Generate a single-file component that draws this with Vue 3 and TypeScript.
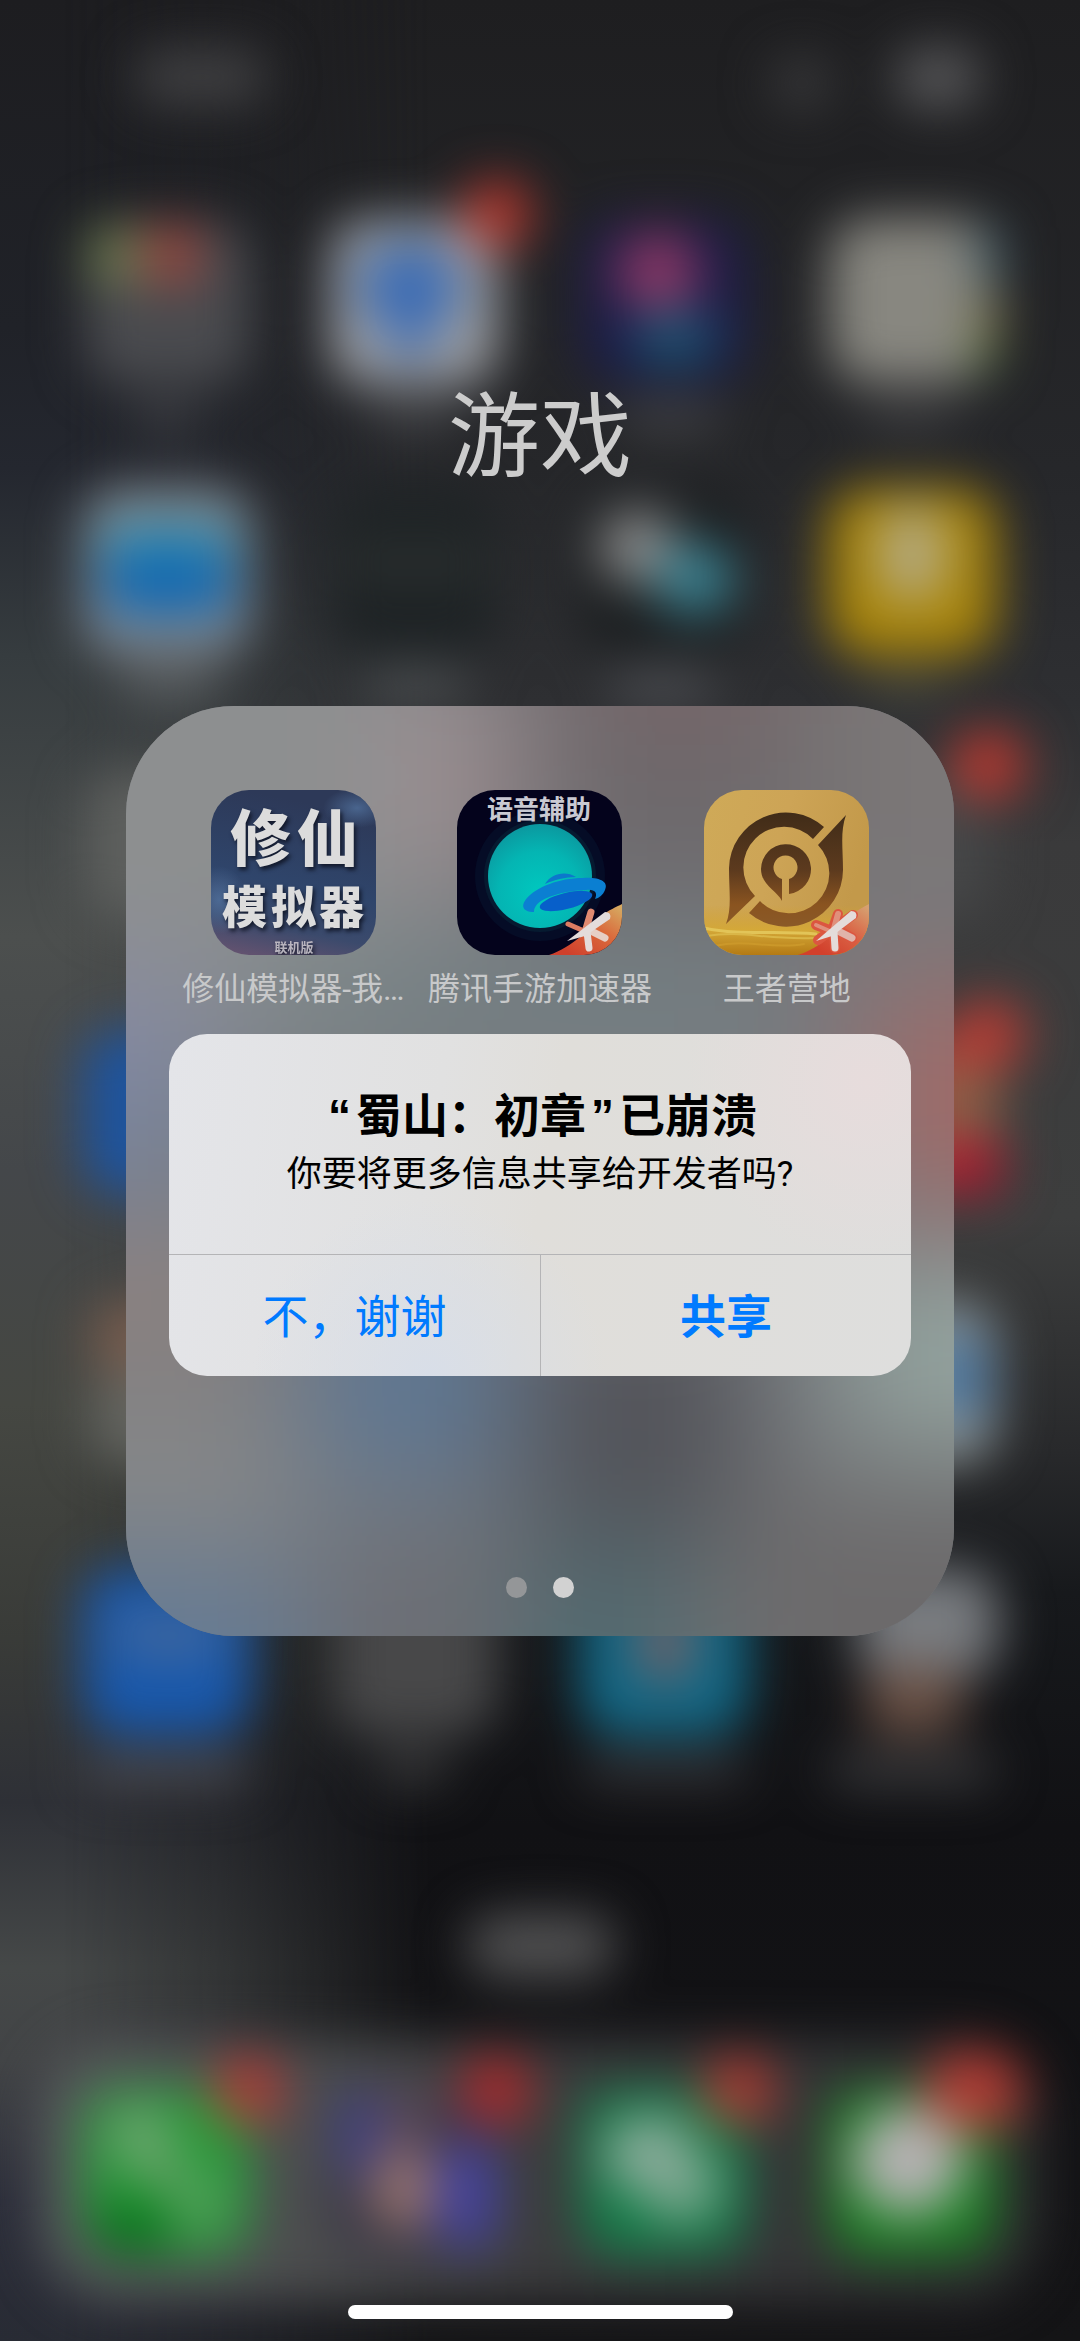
<script setup lang="ts">
interface Blob {
  x: number
  y: number
  w: number
  h: number
  r: number
  fill: string
}

// Home-screen icons, badges and captions behind the open folder.
const wallpaperBlobs: Blob[] = [
  { x: 136, y: 50, w: 130, h: 54, r: 20, fill: '#414143' },
  { x: 772, y: 58, w: 60, h: 50, r: 20, fill: '#39393b' },
  { x: 896, y: 48, w: 84, h: 60, r: 24, fill: '#565658' },
  { x: 85, y: 220, w: 165, h: 165, r: 38, fill: '#4a4b4f' },
  { x: 88, y: 226, w: 52, h: 58, r: 10, fill: '#6c7a50' },
  { x: 144, y: 226, w: 56, h: 58, r: 10, fill: '#98463e' },
  { x: 330, y: 218, w: 168, h: 168, r: 38, fill: '#9c9ea2' },
  { x: 360, y: 246, w: 100, h: 80, r: 40, fill: '#386ab4' },
  { x: 380, y: 290, w: 60, h: 66, r: 30, fill: '#4470b4' },
  { x: 462, y: 180, w: 70, h: 68, r: 34, fill: '#b6382e' },
  { x: 582, y: 218, w: 165, h: 165, r: 38, fill: '#1c1c48' },
  { x: 616, y: 234, w: 84, h: 76, r: 38, fill: '#8a3866' },
  { x: 632, y: 312, w: 84, h: 50, r: 25, fill: '#1d5674' },
  { x: 830, y: 218, w: 165, h: 165, r: 38, fill: '#888780' },
  { x: 975, y: 226, w: 26, h: 62, r: 8, fill: '#47626c' },
  { x: 975, y: 296, w: 26, h: 38, r: 8, fill: '#877a48' },
  { x: 970, y: 336, w: 26, h: 34, r: 8, fill: '#5c7a40' },
  { x: 135, y: 404, w: 64, h: 26, r: 12, fill: '#44454a' },
  { x: 370, y: 404, w: 90, h: 26, r: 12, fill: '#48494d' },
  { x: 620, y: 404, w: 100, h: 26, r: 12, fill: '#48494d' },
  { x: 865, y: 404, w: 90, h: 26, r: 12, fill: '#404042' },
  { x: 83, y: 488, w: 168, h: 168, r: 38, fill: '#848c94' },
  { x: 104, y: 526, w: 128, h: 50, r: 14, fill: '#2a8eb0' },
  { x: 104, y: 552, w: 128, h: 64, r: 18, fill: '#1468b0' },
  { x: 332, y: 490, w: 165, h: 165, r: 38, fill: '#1e2325' },
  { x: 340, y: 550, w: 150, h: 24, r: 12, fill: '#303433' },
  { x: 580, y: 490, w: 165, h: 165, r: 38, fill: '#1c1f21' },
  { x: 598, y: 510, w: 80, h: 74, r: 37, fill: '#8a8a8a' },
  { x: 656, y: 544, w: 78, h: 70, r: 35, fill: '#3b8494' },
  { x: 828, y: 488, w: 168, h: 168, r: 38, fill: '#aa860a' },
  { x: 878, y: 506, w: 68, h: 96, r: 34, fill: '#b4aa80' },
  { x: 120, y: 672, w: 100, h: 28, r: 14, fill: '#626668' },
  { x: 365, y: 672, w: 104, h: 28, r: 14, fill: '#55595b' },
  { x: 610, y: 672, w: 104, h: 28, r: 14, fill: '#55575c' },
  { x: 865, y: 672, w: 84, h: 24, r: 12, fill: '#4e4e40' },
  { x: 85, y: 770, w: 110, h: 150, r: 38, fill: '#5e605e' },
  { x: 900, y: 770, w: 90, h: 150, r: 38, fill: '#464748' },
  { x: 950, y: 730, w: 76, h: 70, r: 35, fill: '#b63830' },
  { x: 83, y: 1030, w: 168, h: 165, r: 38, fill: '#1e549e' },
  { x: 900, y: 1030, w: 98, h: 165, r: 38, fill: '#a04840' },
  { x: 930, y: 1072, w: 68, h: 64, r: 12, fill: '#8a6248' },
  { x: 930, y: 1140, w: 72, h: 54, r: 12, fill: '#a81c30' },
  { x: 950, y: 1000, w: 76, h: 70, r: 35, fill: '#b83c34' },
  { x: 90, y: 1300, w: 140, h: 78, r: 30, fill: '#765c4e' },
  { x: 90, y: 1372, w: 140, h: 90, r: 30, fill: '#646560' },
  { x: 890, y: 1300, w: 106, h: 164, r: 38, fill: '#8b9394' },
  { x: 926, y: 1334, w: 60, h: 84, r: 20, fill: '#4a76a0' },
  { x: 83, y: 1568, w: 168, h: 168, r: 38, fill: '#1858ac' },
  { x: 110, y: 1610, w: 116, h: 50, r: 25, fill: '#3e669e' },
  { x: 332, y: 1570, w: 165, h: 165, r: 38, fill: '#484849' },
  { x: 580, y: 1568, w: 168, h: 168, r: 38, fill: '#126886' },
  { x: 636, y: 1600, w: 58, h: 84, r: 29, fill: '#6c6268' },
  { x: 856, y: 1568, w: 142, h: 110, r: 38, fill: '#797c80' },
  { x: 866, y: 1668, w: 96, h: 66, r: 20, fill: '#6a5044' },
  { x: 84, y: 1756, w: 164, h: 30, r: 14, fill: '#4c4d55' },
  { x: 378, y: 1750, w: 70, h: 34, r: 14, fill: '#3c3c3d' },
  { x: 582, y: 1754, w: 164, h: 28, r: 14, fill: '#3a3a3e' },
  { x: 830, y: 1754, w: 164, h: 32, r: 14, fill: '#3d3d3f' },
  { x: 466, y: 1914, w: 150, h: 64, r: 32, fill: '#525253' },
]

const dockBlobs: Blob[] = [
  { x: 83, y: 2088, w: 168, h: 168, r: 38, fill: '#2a9a3c' },
  { x: 92, y: 2200, w: 80, h: 56, r: 28, fill: '#08781c' },
  { x: 112, y: 2106, w: 54, h: 56, r: 27, fill: '#78a87a' },
  { x: 134, y: 2140, w: 50, h: 50, r: 25, fill: '#68a068' },
  { x: 172, y: 2180, w: 50, h: 46, r: 22, fill: '#60a064' },
  { x: 332, y: 2090, w: 165, h: 165, r: 38, fill: '#3b3848' },
  { x: 336, y: 2090, w: 48, h: 90, r: 24, fill: '#40407e' },
  { x: 384, y: 2090, w: 44, h: 70, r: 20, fill: '#604c58' },
  { x: 372, y: 2150, w: 62, h: 80, r: 30, fill: '#98746c' },
  { x: 436, y: 2140, w: 62, h: 110, r: 30, fill: '#44429c' },
  { x: 580, y: 2088, w: 168, h: 168, r: 38, fill: '#147c48' },
  { x: 604, y: 2116, w: 92, h: 76, r: 38, fill: '#8cac9c' },
  { x: 644, y: 2154, w: 76, h: 66, r: 33, fill: '#80a892' },
  { x: 828, y: 2088, w: 168, h: 168, r: 38, fill: '#1c8224' },
  { x: 852, y: 2106, w: 112, h: 108, r: 54, fill: '#b4b2b2' },
  { x: 212, y: 2054, w: 72, h: 72, r: 36, fill: '#ac3c36' },
  { x: 460, y: 2054, w: 72, h: 72, r: 36, fill: '#a82a2c' },
  { x: 702, y: 2054, w: 74, h: 72, r: 36, fill: '#a83a32' },
  { x: 924, y: 2050, w: 100, h: 80, r: 40, fill: '#b03c34' },
]

interface GameApp {
  id: 'xiuxian' | 'booster' | 'camp'
  name: string
}

const apps: GameApp[] = [
  { id: 'xiuxian', name: '修仙模拟器-我…' },
  { id: 'booster', name: '腾讯手游加速器' },
  { id: 'camp', name: '王者营地' },
]
</script>

<template>
  <div class="screen">
    <svg class="wallpaper" viewBox="0 0 1080 2341" preserveAspectRatio="xMidYMid slice" aria-hidden="true">
      <defs>
        <linearGradient id="wpLeft" x1="0" y1="0" x2="0" y2="1">
          <stop offset="0" stop-color="#1d1d20" />
          <stop offset="0.14" stop-color="#202228" />
          <stop offset="0.2" stop-color="#24272f" />
          <stop offset="0.28" stop-color="#363c3f" />
          <stop offset="0.4" stop-color="#4c4f4e" />
          <stop offset="0.5" stop-color="#44474a" />
          <stop offset="0.6" stop-color="#454742" />
          <stop offset="0.7" stop-color="#393b38" />
          <stop offset="0.77" stop-color="#2e3036" />
          <stop offset="0.84" stop-color="#454848" />
          <stop offset="0.88" stop-color="#424446" />
          <stop offset="0.94" stop-color="#2c2e3a" />
          <stop offset="1" stop-color="#282b34" />
        </linearGradient>
        <linearGradient id="wpRight" x1="0" y1="0" x2="0" y2="1">
          <stop offset="0" stop-color="#1e1e20" />
          <stop offset="0.2" stop-color="#26272a" />
          <stop offset="0.3" stop-color="#2e2f32" />
          <stop offset="0.36" stop-color="#3a3a3b" />
          <stop offset="0.52" stop-color="#3d3e3e" />
          <stop offset="0.62" stop-color="#28292b" />
          <stop offset="0.68" stop-color="#17191c" />
          <stop offset="0.78" stop-color="#111114" />
          <stop offset="1" stop-color="#141416" />
        </linearGradient>
        <linearGradient id="wpFade" x1="0" y1="0" x2="1" y2="0">
          <stop offset="0.06" stop-color="#000" />
          <stop offset="0.2" stop-color="#555" />
          <stop offset="0.4" stop-color="#fff" />
        </linearGradient>
        <linearGradient id="wpDock" x1="0" y1="0" x2="1" y2="0">
          <stop offset="0" stop-color="#585b5d" />
          <stop offset="0.3" stop-color="#4a4b4c" />
          <stop offset="0.5" stop-color="#3c3c3e" />
          <stop offset="1" stop-color="#2e2e30" />
        </linearGradient>
        <mask id="wpMask">
          <rect width="1080" height="2341" fill="url(#wpFade)" />
        </mask>
        <filter id="wpSoft" x="-10%" y="-10%" width="120%" height="120%" color-interpolation-filters="sRGB">
          <feGaussianBlur stdDeviation="25" />
        </filter>
      </defs>
      <rect width="1080" height="2341" fill="url(#wpLeft)" />
      <rect width="1080" height="2341" fill="url(#wpRight)" mask="url(#wpMask)" />
      <g filter="url(#wpSoft)">
        <rect x="40" y="2040" width="1000" height="262" rx="80" fill="url(#wpDock)" />
        <rect
          v-for="(b, i) in wallpaperBlobs"
          :key="'w' + i"
          :x="b.x" :y="b.y" :width="b.w" :height="b.h" :rx="b.r" :fill="b.fill"
        />
        <rect
          v-for="(b, i) in dockBlobs"
          :key="'d' + i"
          :x="b.x" :y="b.y" :width="b.w" :height="b.h" :rx="b.r" :fill="b.fill"
        />
      </g>
    </svg>

    <main class="content">
      <h1 class="folder-title">游戏</h1>

      <section class="folder" aria-label="游戏">
        <svg class="frost" viewBox="0 0 828 930" preserveAspectRatio="none" aria-hidden="true">
          <defs>
            <filter id="frostSoft" x="-30%" y="-30%" width="160%" height="160%" color-interpolation-filters="sRGB">
              <feGaussianBlur stdDeviation="62" />
            </filter>
          </defs>
          <rect width="828" height="930" fill="#777a7e" />
          <g filter="url(#frostSoft)">
            <rect x="-200" y="-200" width="1228" height="1330" fill="#777a7e" />
            <rect x="-200" y="-200" width="490" height="560" fill="#8d8f90" />
            <rect x="270" y="-40" width="120" height="220" fill="#9d8f92" />
            <rect x="400" y="-200" width="290" height="400" fill="#6d696c" />
            <rect x="480" y="-200" width="160" height="220" fill="#796467" />
            <rect x="680" y="-200" width="350" height="400" fill="#7b7777" />
            <rect x="-200" y="270" width="280" height="110" fill="#8589a4" />
            <rect x="130" y="240" width="500" height="90" fill="#728084" />
            <rect x="740" y="280" width="240" height="220" fill="#a06a68" />
            <rect x="-200" y="380" width="280" height="120" fill="#76839a" />
            <rect x="-200" y="520" width="340" height="130" fill="#8e8280" />
            <rect x="190" y="590" width="190" height="180" fill="#5c7694" />
            <rect x="400" y="590" width="220" height="250" fill="#525359" />
            <rect x="720" y="560" width="280" height="180" fill="#95a5a0" />
            <rect x="-200" y="700" width="370" height="130" fill="#88898a" />
            <rect x="-200" y="860" width="370" height="240" fill="#647b96" />
            <rect x="200" y="830" width="180" height="240" fill="#6b6d74" />
            <rect x="400" y="840" width="160" height="240" fill="#4e696f" />
            <rect x="600" y="780" width="400" height="320" fill="#6c6a6b" />
          </g>
        </svg>

        <ul class="apps">
          <li v-for="app in apps" :key="app.id" class="app">
            <svg v-if="app.id === 'xiuxian'" class="app-icon" viewBox="0 0 165 165" role="img" :aria-label="app.name">
              <defs>
                <linearGradient id="xxBg" x1="0.2" y1="0" x2="0" y2="1">
                  <stop offset="0" stop-color="#2d3958" />
                  <stop offset="0.5" stop-color="#2f456b" />
                  <stop offset="0.76" stop-color="#3b4a6c" />
                  <stop offset="1" stop-color="#6b5470" />
                </linearGradient>
                <radialGradient id="xxGlow">
                  <stop offset="0" stop-color="#5577a4" stop-opacity="0.7" />
                  <stop offset="1" stop-color="#5577a4" stop-opacity="0" />
                </radialGradient>
              </defs>
              <rect width="165" height="165" fill="url(#xxBg)" />
              <ellipse cx="146" cy="18" rx="34" ry="20" fill="url(#xxGlow)" />
              <ellipse cx="8" cy="110" rx="28" ry="34" fill="url(#xxGlow)" />
              <g class="icon-words">
                <text x="19" y="71" font-size="61">修</text>
                <text x="86" y="71" font-size="61">仙</text>
                <text x="11" y="134" font-size="45">模</text>
                <text x="60" y="134" font-size="45">拟</text>
                <text x="108" y="134" font-size="45">器</text>
                <text class="icon-note" x="83" y="162" font-size="13" text-anchor="middle">联机版</text>
              </g>
            </svg>

            <svg v-else-if="app.id === 'booster'" class="app-icon" viewBox="0 0 165 165" role="img" :aria-label="app.name">
              <defs>
                <radialGradient id="bsPlanet" cx="0.5" cy="0.66" r="0.66">
                  <stop offset="0" stop-color="#00c8bf" />
                  <stop offset="0.6" stop-color="#04b5b3" />
                  <stop offset="1" stop-color="#0b989f" />
                </radialGradient>
                <linearGradient id="bsCorner" x1="0" y1="1" x2="1" y2="0">
                  <stop offset="0.15" stop-color="#cf402c" />
                  <stop offset="0.6" stop-color="#da6a3c" />
                  <stop offset="0.95" stop-color="#d6a860" />
                </linearGradient>
              </defs>
              <rect width="165" height="165" fill="#04031c" />
              <circle cx="83" cy="86" r="65" fill="#050c26" />
              <circle cx="83" cy="86" r="56" fill="#061a30" />
              <circle cx="83" cy="86" r="52" fill="url(#bsPlanet)" />
              <text class="icon-banner" x="82" y="29" font-size="26" text-anchor="middle">语音辅助</text>
              <path d="M88 94C94 84 108 80 119 87C108 87 97 90 88 94Z" fill="#0c78cc" />
              <path d="M77 122C66 122 63 116 70 108C80 97 102 88 126 88C143 87 152 92 148 100C146 105 142 108 138 109C141 103 138 99 129 100C112 100 94 105 84 111C78 115 77 119 77 122Z" fill="#0b7fd2" />
              <ellipse cx="109" cy="111" rx="27" ry="8" transform="rotate(-14 109 111)" fill="#075fca" />
              <path d="M92 165C116 157 132 139 144 126C152 120 159 117 165 114V165Z" fill="url(#bsCorner)" />
              <g fill="none" stroke-linecap="round">
                <path d="M111 134L127 141" stroke="#dc7c62" stroke-width="5" />
                <path d="M128 142L134 122" stroke="#e08a70" stroke-width="7" />
                <path d="M136 142L148 148" stroke="#e6cfc6" stroke-width="7" />
                <path d="M130 142L132 158" stroke="#e4dcda" stroke-width="7" />
              </g>
              <path d="M110 151L148 122Q155 122 153 129L128 146Z" fill="#e4dcda" />
            </svg>

            <svg v-else class="app-icon" viewBox="0 0 165 165" role="img" :aria-label="app.name">
              <defs>
                <linearGradient id="cpBg" x1="0" y1="0" x2="1" y2="0.3">
                  <stop offset="0" stop-color="#cfaa58" />
                  <stop offset="0.5" stop-color="#cda456" />
                  <stop offset="1" stop-color="#c3994a" />
                </linearGradient>
                <linearGradient id="cpSand" x1="0" y1="0" x2="0" y2="1">
                  <stop offset="0" stop-color="#d0a032" stop-opacity="0" />
                  <stop offset="0.5" stop-color="#d4a838" />
                  <stop offset="1" stop-color="#b47a14" />
                </linearGradient>
                <linearGradient id="cpMark" gradientUnits="userSpaceOnUse" x1="0" y1="22" x2="0" y2="138">
                  <stop offset="0" stop-color="#402c18" />
                  <stop offset="0.5" stop-color="#5c3a1e" />
                  <stop offset="0.8" stop-color="#8a5420" />
                  <stop offset="1" stop-color="#8a5a28" />
                </linearGradient>
                <linearGradient id="cpCorner" x1="0" y1="1" x2="1" y2="0">
                  <stop offset="0.2" stop-color="#d2402c" />
                  <stop offset="0.6" stop-color="#da6446" />
                  <stop offset="0.95" stop-color="#d6a070" />
                </linearGradient>
              </defs>
              <rect width="165" height="165" fill="url(#cpBg)" />
              <rect y="115" width="165" height="50" fill="url(#cpSand)" />
              <g fill="none" stroke-linecap="round">
                <path d="M0 138C36 146 74 140 112 144" stroke="#e2c458" stroke-width="3" />
                <path d="M2 146C40 140 60 150 110 148" stroke="#dab648" stroke-width="2" />
                <path d="M10 156C44 148 66 160 100 154" stroke="#cb982a" stroke-width="2" />
              </g>
              <path d="M120 37A57 57 0 0 0 25 78C25 102 28 118 22 134L51 106A40 40 0 0 1 109 49Z" fill="url(#cpMark)" />
              <path d="M142 25C136 42 139 58 139 80A57 57 0 0 1 45 123L56 111A40 40 0 0 0 114 55Z" fill="url(#cpMark)" />
              <path d="M78 111C73 101 57 95 57 79A25 25 0 1 1 85 104V89A12 12 0 1 0 78 89Z" fill="url(#cpMark)" />
              <path d="M94 165C118 157 132 141 144 128C152 121 159 117 165 114V165Z" fill="url(#cpCorner)" />
              <g fill="none" stroke-linecap="round">
                <path d="M112 135L128 141L134 124M137 142L148 148M130 142L131 158M114 150L149 125" stroke="#dc5640" stroke-width="10" />
                <path d="M112 135L128 142" stroke="#e0907c" stroke-width="4" />
                <path d="M129 142L134 124" stroke="#e0907c" stroke-width="6" />
                <path d="M136 142L148 148" stroke="#e0b4aa" stroke-width="7" />
                <path d="M130 142L131 158" stroke="#e4dcda" stroke-width="7" />
              </g>
              <path d="M112 151L147 121Q154 121 152 128L128 146Z" fill="#e4dcda" />
            </svg>

            <span class="app-name">{{ app.name }}</span>
          </li>
        </ul>

        <div class="dots" aria-hidden="true">
          <span class="dot"></span>
          <span class="dot current"></span>
        </div>
      </section>
    </main>

    <div class="home-bar" aria-hidden="true"></div>

    <div class="alert-layer">
      <div class="alert" role="alertdialog" aria-labelledby="alert-title" aria-describedby="alert-message">
        <div class="alert-body">
          <h2 id="alert-title" class="alert-title"><span class="quote">“</span>蜀山：初章<span class="quote">”</span>已崩溃</h2>
          <p id="alert-message" class="alert-message">你要将更多信息共享给开发者吗?</p>
        </div>
        <div class="alert-actions">
          <button type="button" class="action">不，谢谢</button>
          <button type="button" class="action preferred">共享</button>
        </div>
      </div>
    </div>
  </div>
</template>

<style>
body {
  margin: 0;
  background: #1c1c1e;
}
</style>

<style scoped>
.screen {
  position: relative;
  display: flex;
  flex-direction: column;
  min-height: 100vh;
  overflow: hidden;
  font-family: Roboto, "Noto Sans CJK SC", sans-serif;
}

.wallpaper {
  position: absolute;
  inset: 0;
  width: 100%;
  height: 100%;
}

.content {
  position: relative;
  flex: 1;
  display: flex;
  flex-direction: column;
  align-items: center;
  padding: 378px 126px 0;
}

.folder-title {
  margin: 0 0 208px;
  font-size: 92px;
  line-height: 120px;
  font-weight: 400;
  color: #cccccc;
}

.folder {
  position: relative;
  display: flex;
  flex-direction: column;
  justify-content: space-between;
  box-sizing: border-box;
  width: 100%;
  min-height: 930px;
  padding: 84px 44px 38px;
  border-radius: 108px;
  overflow: hidden;
}

.frost {
  position: absolute;
  inset: 0;
  width: 100%;
  height: 100%;
}

.apps {
  position: relative;
  display: grid;
  grid-template-columns: repeat(3, 1fr);
  margin: 0;
  padding: 0;
  list-style: none;
}

.app {
  display: flex;
  flex-direction: column;
  align-items: center;
  gap: 12px;
  min-width: 0;
}

.app-icon {
  width: 165px;
  height: 165px;
  border-radius: 38px;
}

.icon-words {
  font-family: "Noto Sans CJK SC", sans-serif;
  font-weight: 900;
  fill: #dcdcdc;
  filter: drop-shadow(2px 3px 2px rgb(10 14 28 / 80%));
}

.icon-note {
  font-weight: 700;
  fill: #b8b4be;
}

.icon-banner {
  font-family: "Noto Sans CJK SC", sans-serif;
  font-weight: 700;
  font-style: oblique 8deg;
  fill: #c9c9d2;
}

.app-name {
  font-size: 32px;
  line-height: 44px;
  white-space: nowrap;
  color: #c8c9ca;
}

.dots {
  position: relative;
  display: flex;
  justify-content: center;
  gap: 26px;
}

.dot {
  width: 21px;
  height: 21px;
  border-radius: 50%;
  background: #949698;
}

.dot.current {
  background: #d2d2d2;
}

.home-bar {
  position: relative;
  align-self: center;
  width: 385px;
  height: 14px;
  margin: 24px 0 22px;
  border-radius: 7px;
  background: #ffffff;
}

.alert-layer {
  position: absolute;
  inset: 0;
  display: flex;
  align-items: center;
  justify-content: center;
  padding-top: 68px;
}

.alert {
  width: 742px;
  border-radius: 38px;
  overflow: hidden;
  background:
    radial-gradient(circle at 94% 14%, rgb(231 220 220), rgb(231 220 220 / 0%) 24%),
    radial-gradient(circle at 35% 100%, rgb(216 222 232), rgb(216 222 232 / 0%) 30%),
    linear-gradient(100deg, #e4e5e9, #e1e1e1 35%, #e0deda 50%, #dededd);
}

.alert-body {
  display: flex;
  flex-direction: column;
  align-items: center;
  padding: 52px 24px 54px;
}

.alert-title {
  margin: 0;
  font-size: 46px;
  line-height: 60px;
  font-weight: 600;
  color: #000000;
}

.quote {
  padding: 0 5px;
  font-family: "Liberation Sans", sans-serif;
}

.alert-message {
  margin: 4px 0 0;
  font-size: 35px;
  line-height: 50px;
  color: #000000;
}

.alert-actions {
  display: grid;
  grid-template-columns: 1fr 1fr;
  border-top: 1px solid #b4b4b6;
}

.action {
  height: 121px;
  margin: 0;
  padding: 0 0 4px;
  border: 0;
  background: none;
  font-family: inherit;
  font-size: 46px;
  font-weight: 400;
  color: #007aff;
}

.preferred {
  border-left: 1px solid #b4b4b6;
  font-weight: 600;
}
</style>
